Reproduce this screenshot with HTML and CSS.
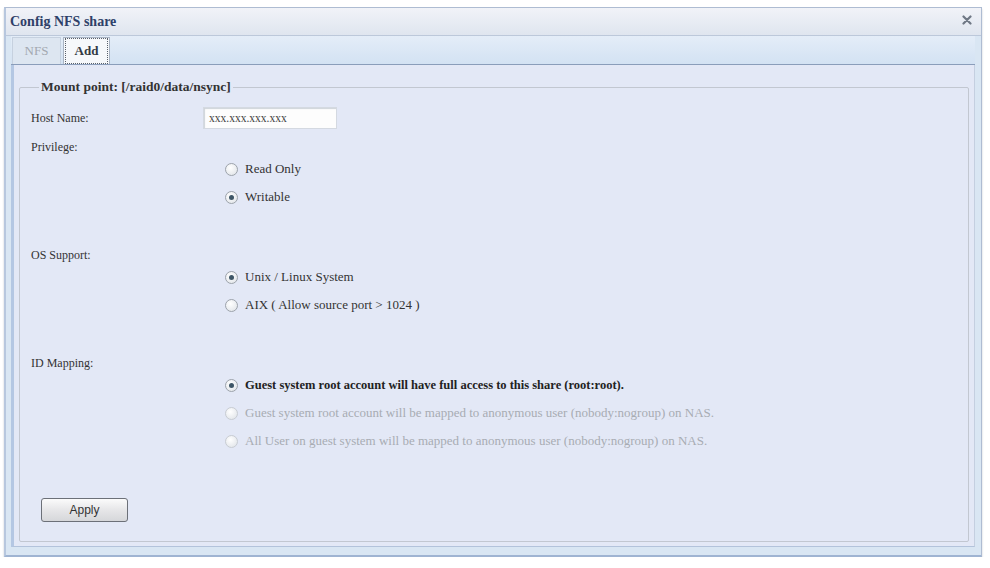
FILE: index.html
```html
<!DOCTYPE html>
<html>
<head>
<meta charset="utf-8">
<link rel="stylesheet" href="styles.css">
</head>
<body>
<div class="window">
  <div class="titlebar">
    <span class="title">Config NFS share</span>
    <span class="close"><svg width="10" height="10" viewBox="0 0 10 10"><path d="M1.5 1.5L8.5 8.5M8.5 1.5L1.5 8.5" stroke="#6f7885" stroke-width="2.2" stroke-linecap="round"/></svg></span>
  </div>
  <div class="frame">
    <div class="tabs">
      <div class="tab">NFS</div>
      <div class="tab active"><span class="focus">Add</span></div>
    </div>
    <div class="panel">
      <fieldset class="group">
        <legend>Mount point: [/raid0/data/nsync]</legend>
        <div class="row host">
          <span class="label">Host Name:</span>
          <span class="input">xxx.xxx.xxx.xxx</span>
        </div>
        <div class="label section">Privilege:</div>
        <div class="options">
          <div class="opt"><span class="radio"></span>Read Only</div>
          <div class="opt"><span class="radio on"></span>Writable</div>
        </div>
        <div class="label section">OS Support:</div>
        <div class="options">
          <div class="opt"><span class="radio on"></span>Unix / Linux System</div>
          <div class="opt"><span class="radio"></span>AIX ( Allow source port &gt; 1024 )</div>
        </div>
        <div class="label section">ID Mapping:</div>
        <div class="options">
          <div class="opt strong"><span class="radio on"></span>Guest system root account will have full access to this share (root:root).</div>
          <div class="opt disabled"><span class="radio"></span>Guest system root account will be mapped to anonymous user (nobody:nogroup) on NAS.</div>
          <div class="opt disabled"><span class="radio"></span>All User on guest system will be mapped to anonymous user (nobody:nogroup) on NAS.</div>
        </div>
        <div class="actions"><span class="btn">Apply</span></div>
      </fieldset>
    </div>
  </div>
</div>
</body>
</html>
```
FILE: styles.css
```css
html, body {
  margin: 0;
  padding: 0;
  background: #ffffff;
}
body {
  font-family: "Liberation Serif", "Times New Roman", serif;
  font-size: 12px;
  color: #2d2d2d;
}
.window {
  box-sizing: border-box;
  margin: 7px 8px 0 4px;
  height: 550px;
  border: 1px solid #aebcd2;
  border-left: 2px solid #b7c7de;
  border-bottom: 2px solid #9fb4d2;
  background: #dbe5f2;
  display: flex;
  flex-direction: column;
  box-shadow: 0 2px 2px #c9ccd2;
}
.titlebar {
  height: 27px;
  flex: none;
  display: flex;
  align-items: center;
  justify-content: space-between;
  padding: 0 8px 0 4px;
  background: linear-gradient(#f1f3f8, #dfe5ef);
  border-bottom: 1px solid #bcc8da;
}
.title {
  font-weight: bold;
  color: #2e4068;
  font-size: 14px;
  margin-top: 1px;
}
.close {
  display: flex;
  width: 12px;
  height: 12px;
  align-items: center;
  justify-content: center;
  margin-top: -4px;
}
.frame {
  flex: 1;
  display: flex;
  flex-direction: column;
  padding: 0 6px 8px 5px;
  background: #d9e6f3;
}
.tabs {
  height: 28px;
  flex: none;
  display: flex;
  align-items: flex-end;
  padding-left: 1px;
  background: linear-gradient(#e4edf8, #d3e2f3);
  border-bottom: 1px solid #8a9dba;
}
.tab {
  height: 26px;
  display: flex;
  align-items: center;
  justify-content: center;
  width: 47px;
  font-size: 13px;
  color: #a3a8b0;
  border: 1px solid #c6d1df;
  border-bottom: none;
  background: #dde6f1;
  margin-right: 2px;
}
.tab.active {
  width: 45px;
  color: #333a44;
  font-weight: bold;
  background: #f6f8fb;
  border-color: #a9b4c4;
}
.focus {
  border: 1px dotted #59606a;
  padding: 4px 9px;
}
.panel {
  flex: 1;
  display: flex;
  background: #e3e8f6;
  border-left: 3px solid #b4c7e3;
  border-right: 1px solid #c4cfe0;
  border-bottom: 1px solid #b3c3db;
  padding: 14px 5px 4px 5px;
}
.group {
  flex: 1;
  margin: 0;
  border: 1px solid #c2c7d1;
  border-radius: 2px;
  padding: 0 0 0 11px;
  display: flex;
  flex-direction: column;
}
legend {
  font-weight: bold;
  color: #333;
  padding: 0 2px;
  margin-left: 8px;
  font-size: 13.5px;
}
.row {
  display: flex;
  align-items: center;
}
.host {
  margin-top: 12px;
  height: 22px;
}
.label {
  width: 172px;
  color: #333;
}
.section {
  margin-top: 11px;
}
.input {
  box-sizing: border-box;
  width: 134px;
  height: 22px;
  background: #fdfdfd;
  border: 1px solid #d4d9e1;
  box-shadow: inset 1px 1px 1px #cfd4da;
  display: flex;
  align-items: center;
  padding-left: 5px;
  font-size: 11.5px;
  color: #444;
}
.options {
  padding-left: 194px;
  display: flex;
  flex-direction: column;
  margin-top: 0;
  margin-bottom: 26px;
}
.opt {
  display: flex;
  align-items: center;
  height: 28px;
  font-size: 13px;
  color: #333;
}
.opt.strong {
  color: #222;
  font-weight: bold;
  font-size: 12.5px;
}
.opt.disabled {
  color: #a8acb3;
}
.radio {
  width: 11px;
  height: 11px;
  border-radius: 50%;
  border: 1px solid #9da3ab;
  background: radial-gradient(circle at 40% 35%, #ffffff, #dde1e6);
  margin-right: 7px;
  position: relative;
  flex: none;
}
.radio.on::after {
  content: "";
  position: absolute;
  left: 3px;
  top: 3px;
  width: 5px;
  height: 5px;
  border-radius: 50%;
  background: #3d5566;
}
.opt.disabled .radio {
  border-color: #c8ccd2;
}
.actions {
  margin-top: auto;
  padding: 0 0 19px 10px;
}
.btn {
  box-sizing: border-box;
  display: inline-flex;
  width: 87px;
  height: 24px;
  align-items: center;
  justify-content: center;
  border: 1px solid #6c7078;
  border-radius: 3px;
  background: linear-gradient(#fbfbfb, #e6e6e8 50%, #d6d7da);
  font-family: "Liberation Sans", Arial, sans-serif;
  font-size: 12px;
  color: #333;
}
```
